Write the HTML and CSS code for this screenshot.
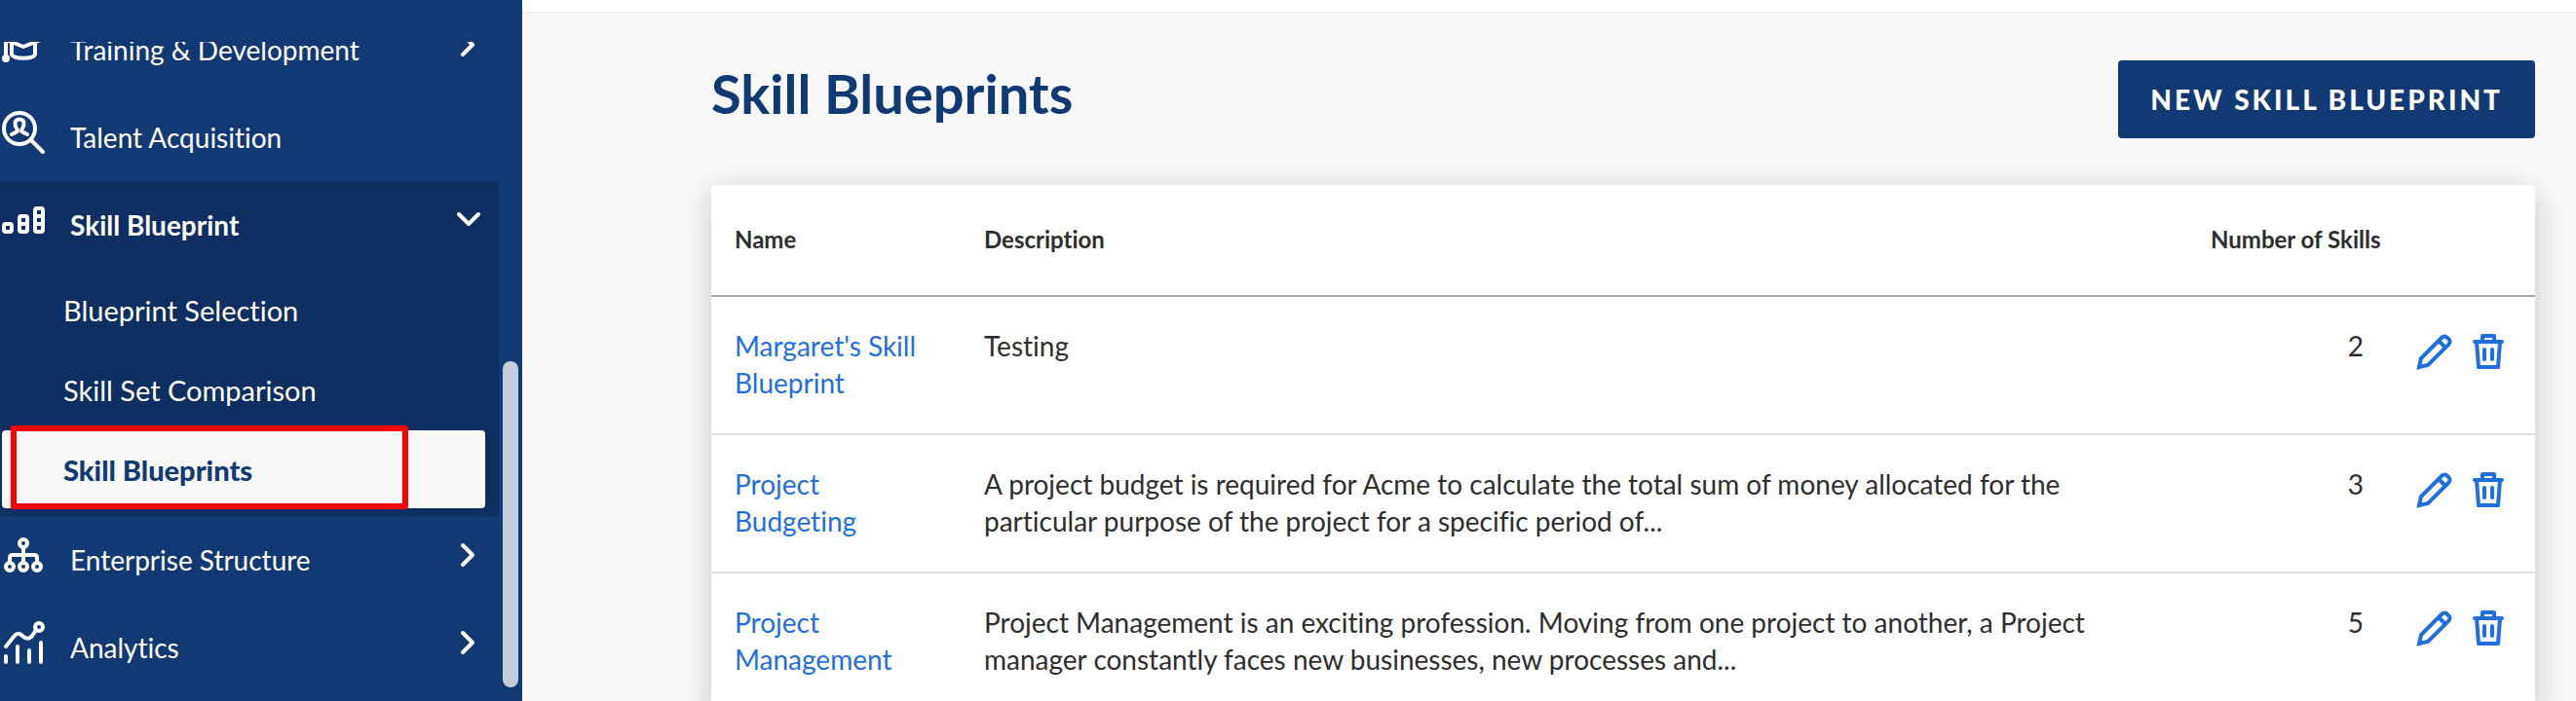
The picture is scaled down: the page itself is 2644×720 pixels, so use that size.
FILE: index.html
```html
<!DOCTYPE html>
<html lang="en">
<head>
    <meta charset="UTF-8">
    <meta name="viewport" content="width=device-width, initial-scale=1.0">
    <title>Skill Blueprints</title>
    <link rel="stylesheet" href="styles.css">
</head>
<body>
    <!-- Icons used more than once -->
    <svg class="sprite" aria-hidden="true">
        <symbol id="chevron-right" viewBox="0 0 24 48">
            <path d="M6 14l10 10L6 34"/>
        </symbol>
        <symbol id="pencil" viewBox="0 0 40 40">
            <path stroke-linejoin="miter" d="M5 36l2-9L28 6q3-3 6 0l1 1q3 3 0 6L14 34z"/>
            <path stroke-linecap="butt" d="M25 9l7 7"/>
        </symbol>
        <symbol id="trash" viewBox="0 0 40 40">
            <path d="M6 10h28M14 10V4h12v6M8 10l2 26h20l2-26M16 18v10M24 18v10"/>
        </symbol>
    </svg>

    <div class="layout">
        <aside class="sidebar">
            <nav class="nav">
                <ul class="menu">
                    <li>
                        <button type="button" class="menu-item">
                            <svg class="icon" viewBox="0 0 48 48"><path d="M6 18v20M12 18v16c2 5 22 5 24 0V18M4 18l20 8 20-8"/><circle class="dot" cx="6" cy="38" r="4"/></svg>
                            <span class="label">Training &amp; Development</span>
                            <svg class="chevron"><use href="#chevron-right"/></svg>
                        </button>
                    </li>
                    <li>
                        <a href="#" class="menu-item">
                            <svg class="icon" viewBox="0 0 48 48"><circle cx="20" cy="20" r="16"/><path d="M32 32l12 12M12 26l5-2.500c1.500-1 1-2 0-3.500-1-1.500-1.500-3-1.500-5 0-3 1.500-4.500 4.500-4.500s4.500 1.500 4.500 4.500c0 2-.5 3.500-1.500 5-1 1.500-1.500 2.500 0 3.500l5 2.500"/></svg>
                            <span class="label">Talent Acquisition</span>
                        </a>
                    </li>
                    <li class="open">
                        <button type="button" class="menu-item" aria-expanded="true">
                            <svg class="icon" viewBox="0 0 48 48"><rect x="4" y="28" width="8" height="8" rx="2"/><rect x="20" y="20" width="8" height="16" rx="2"/><rect x="36" y="12" width="8" height="24" rx="2"/><path d="M20 28h8M36 20h8M36 28h8"/></svg>
                            <span class="label">Skill Blueprint</span>
                            <svg class="chevron" viewBox="0 0 24 48"><path d="M2 18l10 10 10-10"/></svg>
                        </button>
                        <ul class="submenu">
                            <li><a href="#">Blueprint Selection</a></li>
                            <li><a href="#">Skill Set Comparison</a></li>
                            <li class="active"><a href="#" aria-current="page">Skill Blueprints</a></li>
                        </ul>
                    </li>
                    <li>
                        <button type="button" class="menu-item">
                            <svg class="icon" viewBox="0 0 48 48"><circle cx="24" cy="12" r="4"/><circle cx="10" cy="36" r="4"/><circle cx="24" cy="36" r="4"/><circle cx="38" cy="36" r="4"/><path d="M24 16v16M10 32v-5q0-3 3-3h22q3 0 3 3v5"/></svg>
                            <span class="label">Enterprise Structure</span>
                            <svg class="chevron"><use href="#chevron-right"/></svg>
                        </button>
                    </li>
                    <li>
                        <button type="button" class="menu-item">
                            <svg class="icon" viewBox="0 0 48 48"><circle cx="40" cy="8" r="4"/><path d="M6 28l8-10c3-4 6-4 9-1s7 4 10 0l4-6M6 38v6M18 28v16M30 32v12M42 24v20"/></svg>
                            <span class="label">Analytics</span>
                            <svg class="chevron"><use href="#chevron-right"/></svg>
                        </button>
                    </li>
                </ul>
            </nav>
            <div class="scroll-thumb"></div>
        </aside>

        <div class="page">
            <div class="topbar"></div>
            <main class="content">
                <header class="page-header">
                    <h1>Skill Blueprints</h1>
                    <button type="button" class="button">NEW SKILL BLUEPRINT</button>
                </header>

                <table class="blueprints">
                    <thead>
                        <tr>
                            <th class="col-name">Name</th>
                            <th>Description</th>
                            <th class="col-count">Number of Skills</th>
                            <th class="col-actions"></th>
                        </tr>
                    </thead>
                    <tbody>
                        <tr>
                            <td><a href="#">Margaret's Skill Blueprint</a></td>
                            <td>Testing</td>
                            <td class="count">2</td>
                            <td class="actions">
                                <div class="action-list">
                                    <button type="button" aria-label="Edit"><svg><use href="#pencil"/></svg></button>
                                    <button type="button" aria-label="Delete"><svg><use href="#trash"/></svg></button>
                                </div>
                            </td>
                        </tr>
                        <tr>
                            <td><a href="#">Project Budgeting</a></td>
                            <td>A project budget is required for Acme to calculate the total sum of money allocated for the particular purpose of the project for a specific period of...</td>
                            <td class="count">3</td>
                            <td class="actions">
                                <div class="action-list">
                                    <button type="button" aria-label="Edit"><svg><use href="#pencil"/></svg></button>
                                    <button type="button" aria-label="Delete"><svg><use href="#trash"/></svg></button>
                                </div>
                            </td>
                        </tr>
                        <tr>
                            <td><a href="#">Project Management</a></td>
                            <td>Project Management is an exciting profession. Moving from one project to another, a Project manager constantly faces new businesses, new processes and...</td>
                            <td class="count">5</td>
                            <td class="actions">
                                <div class="action-list">
                                    <button type="button" aria-label="Edit"><svg><use href="#pencil"/></svg></button>
                                    <button type="button" aria-label="Delete"><svg><use href="#trash"/></svg></button>
                                </div>
                            </td>
                        </tr>
                    </tbody>
                </table>
            </main>
        </div>
    </div>
</body>
</html>
```
FILE: styles.css
```css
* {
    box-sizing: border-box;
}
body {
    margin: 0;
    font-family: Lato, sans-serif;
    font-size: 28px;
    line-height: 38px;
    font-variant-ligatures: none;
    color: #2e2e2e;
    background-color: #f8f8f8;
}
ul {
    list-style: none;
    margin: 0;
    padding: 0;
}
a {
    color: #1f6fde;
    text-decoration: none;
}
button {
    font: inherit;
    font-variant-ligatures: none;
    color: inherit;
    background: none;
    border: none;
    padding: 0;
    cursor: pointer;
}
svg {
    display: block;
    fill: none;
    stroke: currentColor;
    stroke-width: 4;
    stroke-linecap: round;
    stroke-linejoin: round;
}
.sprite {
    display: none;
}
.layout {
    display: flex;
    height: 100vh;
    overflow: hidden;
}

/* Sidebar */
.sidebar {
    position: relative;
    flex: 0 0 536px;
    padding: 43px 24px 0 0;
    background-color: #113a74;
    color: #ffffff;
}
.nav {
    height: 100%;
    overflow: hidden;
}
/* the list is scrolled, so the first item is partly cut off */
.menu {
    margin-top: -37px;
}
.menu-item {
    display: flex;
    align-items: flex-start;
    width: 100%;
    height: 90px;
    padding: 16px 19px 0 0;
    color: #ffffff;
    text-align: left;
}
.icon {
    width: 48px;
    height: 48px;
    margin-right: 24px;
}
.dot {
    fill: currentColor;
    stroke: none;
}
.label {
    flex: 1;
    padding-top: 10px;
}
.chevron {
    width: 24px;
    height: 48px;
}
.open {
    background-color: #0d2f61;
    padding-bottom: 8px;
}
.open .label {
    font-weight: bold;
}
.submenu {
    padding-top: 2px;
    font-size: 29px;
}
.submenu li {
    position: relative;
    margin: 0 14px 2px 2px;
}
.submenu a {
    display: block;
    padding: 22px 63px 20px;
    border-radius: 4px;
    color: #ffffff;
}
.submenu .active {
    margin-bottom: 0;
}
.submenu .active a {
    background-color: #f8f8f8;
    color: #113a74;
    font-weight: 900;
}
/* Red highlight over the current page */
.active::after {
    content: "";
    position: absolute;
    top: -5px;
    bottom: -1px;
    left: 9px;
    right: 79px;
    border: 6px solid #ff0000;
    border-radius: 3px;
    pointer-events: none;
}
.scroll-thumb {
    position: absolute;
    right: 4px;
    bottom: 14px;
    width: 16px;
    height: 335px;
    border-radius: 8px;
    background-color: #c4cddc;
}

/* Page */
.page {
    flex: 1;
}
.topbar {
    height: 14px;
    background-color: #ffffff;
    border-bottom: 2px solid #f0f0f0;
}
.content {
    padding: 48px 42px 48px 194px;
}
.page-header {
    display: flex;
    justify-content: space-between;
    align-items: flex-start;
    margin-bottom: 48px;
}
h1 {
    margin: 0;
    font-size: 56px;
    line-height: 68px;
    color: #113a74;
}
.button {
    height: 80px;
    padding: 0 33px;
    border-radius: 4px;
    background-color: #113a74;
    color: #ffffff;
    font-weight: 900;
    letter-spacing: 3px;
}

/* Table */
.blueprints {
    width: 100%;
    table-layout: fixed;
    border-spacing: 0;
    border-radius: 4px;
    background-color: #ffffff;
    box-shadow: 0 8px 32px rgba(0, 0, 0, 0.2);
}
th {
    padding: 39px 24px 40px;
    border-bottom: 2px solid #a8a8a8;
    font-size: 24px;
    line-height: 34px;
    text-align: left;
}
td {
    padding: 31px 24px 33px;
    border-bottom: 2px solid #dde2e6;
    vertical-align: top;
}
.col-name {
    width: 256px;
}
.col-count {
    width: 221px;
    white-space: nowrap;
    text-align: right;
}
.col-actions {
    width: 136px;
}
.count {
    padding-right: 40px;
    text-align: right;
}
.actions {
    padding: 36px 0 0 12px;
}
.action-list {
    display: flex;
    gap: 16px;
    color: #1f6fde;
}
.action-list svg {
    width: 40px;
    height: 40px;
}
```
